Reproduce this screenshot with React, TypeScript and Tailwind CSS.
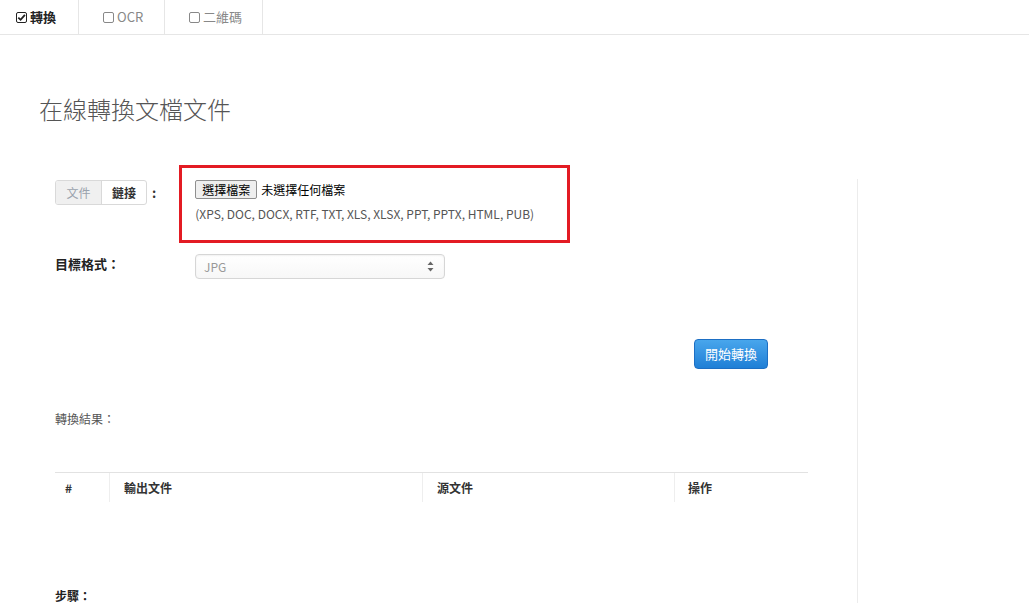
import React from 'react';

const font = { fontFamily: '"Noto Sans CJK TC", "Open Sans", sans-serif' };

function Check({ on }: { on?: boolean }) {
  return (
    <svg width="11" height="11" viewBox="0 0 11 11" className="mr-[3px] shrink-0">
      <rect x="0.5" y="0.5" width="10" height="10" rx="1.5" fill="none" stroke={on ? '#222' : '#888'} strokeWidth="1" />
      {on && <path d="M2.3 5.6 L4.6 7.8 L8.9 2.8" fill="none" stroke="#222" strokeWidth="1.8" />}
    </svg>
  );
}

export default function App() {
  return (
    <div className="w-[1029px] h-[603px] overflow-hidden bg-white text-[13px] text-[#333]" style={font}>
      <nav className="h-[35px] flex border-b border-[#e6e6e6]">
        <div className="w-[79px] flex items-center pl-[16px] border-r border-[#e6e6e6] font-bold text-[#222]">
          <Check on />轉換
        </div>
        <div className="w-[86px] flex items-center pl-[24px] border-r border-[#e6e6e6] text-[#888]">
          <Check />OCR
        </div>
        <div className="w-[98px] flex items-center pl-[24px] border-r border-[#e6e6e6] text-[#888]">
          <Check />二維碼
        </div>
      </nav>

      <h1 className="pl-[39px] pt-[57px] text-[24px] leading-[34px] font-light text-[#555]">在線轉換文檔文件</h1>

      <div className="flex mt-[39px] pl-[40px]">
        <main className="w-[817px] pl-[15px]">
          <div className="flex items-start">
            <div className="mt-[15px] flex items-center">
              <div className="flex h-[25px] rounded-[3px] border border-[#d9d9d9] text-[12px] overflow-hidden">
                <span className="w-[46px] flex items-center justify-center bg-[#f0f0f0] text-[#9aa2ad] border-r border-[#d9d9d9]">文件</span>
                <span className="w-[44px] flex items-center justify-center font-bold text-[#333]">鏈接</span>
              </div>
              <span className="ml-[5px] font-bold">:</span>
            </div>
            <div className="ml-[23px] w-[391px] h-[78px] border-[3px] border-[#e31b23] pl-[13px] pt-[12px]">
              <div className="flex items-center">
                <span className="h-[19px] px-[6px] flex items-center border border-[#8f8f8f] bg-[#efefef] text-[12px] text-black rounded-[2px]">選擇檔案</span>
                <span className="ml-[4px] text-[12px] text-black">未選擇任何檔案</span>
              </div>
              <div className="mt-[6px] text-[12px] text-[#555]">(XPS, DOC, DOCX, RTF, TXT, XLS, XLSX, PPT, PPTX, HTML, PUB)</div>
            </div>
          </div>

          <div className="flex items-start mt-[11px]">
            <span className="w-[140px] mt-[1px] font-bold text-[#222] leading-[18px]">目標格式：</span>
            <div className="w-[250px] h-[25px] flex items-center justify-between rounded-[4px] border border-[#d6d6d6] shadow-[inset_0_1px_2px_rgba(0,0,0,0.06)] bg-gradient-to-b from-white to-[#f7f7f7] pl-[8px] pr-[10px] text-[12px] text-[#999]">
              <span>JPG</span>
              <svg width="7" height="11" viewBox="0 0 7 11">
                <path d="M3.5 0.5 L6.5 4 L0.5 4 Z" fill="#666" />
                <path d="M3.5 10.5 L6.5 7 L0.5 7 Z" fill="#666" />
              </svg>
            </div>
          </div>

          <div className="flex justify-end w-[713px] mt-[60px]">
            <button className="w-[74px] h-[30px] rounded-[4px] border border-[#1d6fc4] bg-gradient-to-b from-[#48a6ec] to-[#1f7fd6] text-white text-[13px]">開始轉換</button>
          </div>

          <div className="mt-[41px] text-[12px] text-[#555]">轉換結果：</div>

          <div className="mt-[44px] w-[753px] border-t border-[#e2e2e2] flex h-[30px] items-center text-[12px] font-bold text-[#333]">
            <div className="w-[55px] h-full flex items-center pl-[10px] border-r border-[#eeeeee]">#</div>
            <div className="w-[313px] h-full flex items-center pl-[14px] border-r border-[#eeeeee]">輸出文件</div>
            <div className="w-[252px] h-full flex items-center pl-[14px] border-r border-[#eeeeee]">源文件</div>
            <div className="flex-1 h-full flex items-center pl-[13px]">操作</div>
          </div>

          <div className="mt-[85px] font-bold text-[12px] text-[#222]">步驟：</div>
        </main>
        <aside className="mt-[14px] flex-1 border-l border-[#ececec]" />
      </div>
    </div>
  );
}
